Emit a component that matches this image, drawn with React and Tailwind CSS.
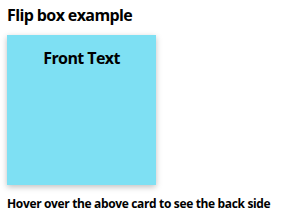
export default function App() {
    return (
        <div className="bg-white px-[7px] pt-[4px] font-['Open_Sans',sans-serif] text-black">
            <h1 className="text-[16px] font-bold leading-[22px] tracking-[-0.6px]">Flip box example</h1>
            <div className="mt-[9px] h-[150px] w-[149px] bg-[#7ee0f3] pt-[12px] text-center shadow-[0_2px_6px_rgba(0,0,0,0.25)]">
                <p className="text-[16px] font-bold leading-[22px] tracking-[-0.6px]">Front Text</p>
            </div>
            <p className="mt-[13px] text-[12px] font-bold leading-[12px] tracking-[-0.35px]">Hover over the above card to see the back side</p>
        </div>
    );
}
